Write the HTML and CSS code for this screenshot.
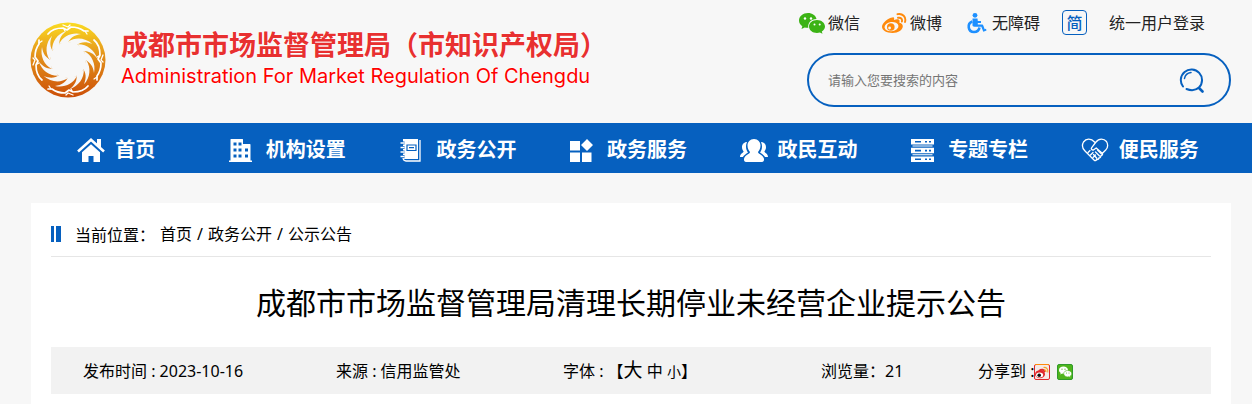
FILE: index.html
```
<!DOCTYPE html>
<html lang="zh-CN">
<head>
  <meta charset="UTF-8">
  <meta name="viewport" content="width=device-width, initial-scale=1.0">
  <title>成都市市场监督管理局清理长期停业未经营企业提示公告</title>
  <link rel="stylesheet" href="styles.css">
</head>
<body>

  <header class="header">
    <a class="logo" href="#">
      <svg class="logo-mark" viewBox="0 0 76 76" aria-hidden="true">
        <defs>
          <linearGradient id="gold" x1="0" y1="0" x2="0" y2="1">
            <stop offset="0" stop-color="#fbdc22"/>
            <stop offset="0.45" stop-color="#e3901a"/>
            <stop offset="1" stop-color="#cc4f08"/>
          </linearGradient>
          <path id="ray" d="M29 22 C33 14 42 10 51 12 C44 13 40 16 38 21 Z"/>
          <g id="bird" fill="none" stroke="#fff" stroke-linecap="round" stroke-linejoin="round">
            <path stroke-width="1.700" d="M18 12 C22 7 27 6 33 6 L37 8 L41 5 C46 5 50 6 54 9 L58 9"/>
            <path stroke-width="1.300" d="M33 3 L38 5 L40 3 M55 9 L57 12 M34 7 L35 9"/>
          </g>
        </defs>
        <circle cx="38" cy="38" r="37.500" fill="url(#gold)"/>
        <circle cx="38" cy="38" r="18" fill="#f7f7f7"/>
        <g fill="#f7f7f7">
          <use href="#ray"/>
          <use href="#ray" transform="rotate(30 38 38)"/>
          <use href="#ray" transform="rotate(60 38 38)"/>
          <use href="#ray" transform="rotate(90 38 38)"/>
          <use href="#ray" transform="rotate(120 38 38)"/>
          <use href="#ray" transform="rotate(150 38 38)"/>
          <use href="#ray" transform="rotate(180 38 38)"/>
          <use href="#ray" transform="rotate(210 38 38)"/>
          <use href="#ray" transform="rotate(240 38 38)"/>
          <use href="#ray" transform="rotate(270 38 38)"/>
          <use href="#ray" transform="rotate(300 38 38)"/>
          <use href="#ray" transform="rotate(330 38 38)"/>
        </g>
        <use href="#bird"/>
        <use href="#bird" transform="rotate(90 38 38)"/>
        <use href="#bird" transform="rotate(180 38 38)"/>
        <use href="#bird" transform="rotate(270 38 38)"/>
      </svg>
      <span class="logo-text">
        <span class="logo-cn">成都市市场监督管理局（市知识产权局）</span>
        <span class="logo-en">Administration For Market Regulation Of Chengdu</span>
      </span>
    </a>

    <div class="tools">
      <div class="top-links">
        <a href="#">
          <svg class="top-icon" viewBox="0 0 26 22" aria-hidden="true">
            <path fill="#3cb315" d="M9 1C4 1 0 4.300 0 8.500c0 2.400 1.300 4.300 3.300 5.700L2.500 17l3.200-1.600c1.200.3 2.200.5 3.600.4C8.500 11 12 7 17.500 7 16.800 3.500 13.200 1 9 1z"/>
            <path fill="#3cb315" d="M18 8c-4.500 0-8 2.900-8 6.500S13.500 21 18 21c1 0 2-.2 2.900-.5l2.600 1.300-.7-2.300c1.900-1.300 3.200-3 3.200-5C26 10.900 22.400 8 18 8z"/>
            <g fill="#fff"><circle cx="6" cy="6.500" r="1.200"/><circle cx="12" cy="6.500" r="1.200"/><circle cx="15.500" cy="12.500" r="1"/><circle cx="20.700" cy="12.500" r="1"/></g>
          </svg>
          微信
        </a>
        <a href="#">
          <svg class="top-icon" viewBox="0 0 25 22" aria-hidden="true">
            <path fill="#ff8a0c" d="M10.500 5.500C12 5 12.500 6 12 8c3-1.200 5.500-1 5.600 1 0 1-.6 1.500 0 1.800 2 .6 3.200 1.700 3.200 3.500 0 3.500-4.500 6.700-10.300 6.700C4.500 21 0 18.500 0 14.800 0 11 6.500 5.800 10.500 5.500z"/>
            <ellipse cx="9.500" cy="14.600" rx="7" ry="4.600" fill="#f7f7f7" transform="rotate(-7 9.500 14.600)"/>
            <circle cx="8.800" cy="15" r="3.800" fill="#ff8a0c"/>
            <circle cx="7.600" cy="16" r="1.400" fill="#f7f7f7"/>
            <path d="M15.500 2.200c5-1.200 9 2.800 7.500 7.800M16 5.800c2.800-.6 4.600 1.200 3.900 3.800" fill="none" stroke="#ff8a0c" stroke-width="1.900" stroke-linecap="round"/>
          </svg>
          微博
        </a>
        <a href="#">
          <svg class="top-icon" viewBox="0 0 25 22" aria-hidden="true">
            <circle cx="11" cy="3.300" r="2.400" fill="#1e90ff"/>
            <path fill="#1e90ff" d="M8.500 6.500h5l.3 2.500H17v2h-3.200v1.500h4c1 0 1.300.4 1.600 1.200l1.300 3.500 1.300-.4.5 1.700-3.200 1.200-2-5H10.500C9 14.700 8.500 14 8.500 13z"/>
            <path d="M8.300 9.500c-5.500 2-4.500 10.500 1.700 10.500 3 0 5-1.800 5.500-4.500" fill="none" stroke="#1e90ff" stroke-width="2.600"/>
          </svg>
          无障碍
        </a>
        <button class="lang-btn" type="button">简</button>
        <a href="#">统一用户登录</a>
      </div>

      <form class="search">
        <input type="text" placeholder="请输入您要搜索的内容" aria-label="搜索">
        <button type="submit" aria-label="搜索">
          <svg viewBox="0 0 26 26" aria-hidden="true">
            <g fill="none" stroke="#0660bf" stroke-linecap="round">
              <path stroke-width="2" d="M4 19.500A10.600 10.600 0 1 1 20 20.500Q15 25 7.500 22"/>
              <path stroke-width="1.500" d="M5.500 11.500C6 8.500 8.500 6 12 5.500"/>
              <path stroke-width="2.600" d="M20 21l3.500 3.500"/>
            </g>
          </svg>
        </button>
      </form>
    </div>
  </header>

  <nav class="nav">
    <a href="#">
      <svg viewBox="0 0 28 24" aria-hidden="true">
        <path d="M1 13.500L14 1.800l13 11.700" fill="none" stroke="#fff" stroke-width="2.600"/>
        <path fill="#fff" d="M20 1h4v9l-4-3.500zM14 6.200l9 8V24h-6.500v-6h-5v6H5v-9.800z"/>
      </svg>
      首页
    </a>
    <a href="#">
      <svg viewBox="0 0 28 24" aria-hidden="true">
        <path fill="#fff" fill-rule="evenodd" d="M2.500 22.500V1.500Q2.500 1 3 1H14.500Q15 1 15 1.500V6H22Q22.500 6 22.500 7V22.500H24V24H1V22.500zM5.500 4.500v3h3v-3zM10.500 4.500v3h3v-3zM5.500 10.500v3h3v-3zM10.500 10.500v3h3v-3zM17 10.500v3h3v-3zM5.500 16.500v3h3v-3zM10.500 16.500v3h3v-3zM17 16.500v3h3v-3z"/>
      </svg>
      机构设置
    </a>
    <a href="#">
      <svg viewBox="0 0 28 24" aria-hidden="true">
        <path fill="#fff" d="M5 1h15v20H7q-2 0-2-2z"/>
        <path d="M5 20q.5 3 3 3h14V2" fill="none" stroke="#fff" stroke-width="1.300"/>
        <path d="M2.500 5h4M2.500 9.500h4M2.500 14h4M2.500 18.500h4" stroke="#0660bf" stroke-width="3"/>
        <path d="M2.500 5h4M2.500 9.500h4M2.500 14h4M2.500 18.500h4" stroke="#fff" stroke-width="1.500"/>
        <path d="M9 7h9v5.500H9zM11 9.700h5" fill="none" stroke="#0660bf" stroke-width="1.200"/>
      </svg>
      政务公开
    </a>
    <a href="#">
      <svg viewBox="0 0 28 24" aria-hidden="true">
        <path fill="#fff" d="M1 3h10v9.500H1zM1 14.500h10V24H1zM13 14.500h9.500V24H13zM18 1l6 6-6 6-6-6z"/>
      </svg>
      政务服务
    </a>
    <a href="#">
      <svg viewBox="0 0 28 24" aria-hidden="true">
        <path fill="#fff" d="M14 1c4 0 6.500 3 6.500 6.500 0 3-1.200 5-2.500 6.500 0 2 5.500 3 6 7 .2 1.800-.5 3-2 3H6c-1.500 0-2.200-1.200-2-3 .5-4 6-5 6-7-1.300-1.500-2.500-3.500-2.500-6.500C7.500 4 10 1 14 1z"/>
        <path fill="#fff" d="M7 4C4 4 2 6.500 2 9c0 2 .7 3.300 1.600 4.500C3.300 15 0 15.500 0 19h3c.7-1.800 3-3 5-4.500C6 11.500 5.200 8 7 4zM21 4c3 0 5 2.500 5 5 0 2-.7 3.300-1.600 4.500.3 1.500 3.600 2 3.600 5.500h-3c-.7-1.800-3-3-5-4.500 2-3 2.800-6.500 1-10.500z"/>
      </svg>
      政民互动
    </a>
    <a href="#">
      <svg viewBox="0 0 28 24" aria-hidden="true">
        <path fill="#fff" d="M1 1h23v5.500H1zM1 9.800h23v5.500H1zM1 18.500h23V24H1zM2.500 7.500h20v1h-20zM2.500 16.300h20v1h-20z"/>
        <path stroke="#0660bf" stroke-width="1.600" d="M5 3.800h6M15 3.800h2M19 3.800h2M5 12.600h6M15 12.600h2M19 12.600h2M5 21.300h6M15 21.300h2M19 21.300h2"/>
      </svg>
      专题专栏
    </a>
    <a href="#">
      <svg viewBox="0 0 28 24" aria-hidden="true">
        <g fill="none" stroke="#fff" stroke-width="1.300" stroke-linecap="round" stroke-linejoin="round">
          <path d="M13.500 4C10 0 5 .5 2.500 4c-2 3.500-1 6.500 1.500 9l9 9c1 1 2 1 2.500-.5 1.500.5 2.500-.5 2.200-1.500 1.500 0 2.300-1 2-2.200 1.500 0 2.300-1.300 1.500-2.500l-6-5.300-2.500 1.800c-1.500.7-3-.8-2-2.200L15 4c3-4 8-3.500 10.500-.5 2 3.500 1.500 6-.8 8.500l-3.500 3.500"/>
          <path d="M7 14.500l2-2M9.500 17l2.500-2.500M12 19.500l2.500-2.500M14.500 14l4 4M12.500 16.500l3.500 4M16.500 12l4 4"/>
        </g>
      </svg>
      便民服务
    </a>
  </nav>

  <main class="article">
    <div class="crumbs">
      <span>当前位置<span class="colon">：</span></span> <a href="#">首页</a> / <a href="#">政务公开</a> / <a href="#">公示公告</a>
    </div>
    <h1>成都市市场监督管理局清理长期停业未经营企业提示公告</h1>
    <div class="meta">
      <span>发布时间 : 2023-10-16</span>
      <span>来源 : 信用监管处</span>
      <span class="font-size">字体 : 【<button class="big" type="button">大</button> <button type="button">中</button> <button class="small" type="button">小</button>】</span>
      <span>浏览量<span class="colon">：</span>21</span>
      <span class="share">分享到 :
        <a href="#" aria-label="分享到微博">
          <svg viewBox="0 0 16 16" aria-hidden="true">
            <rect x="0.500" y="0.500" width="15" height="15" rx="1.500" fill="#f5e9e6" stroke="#e0282c"/>
            <path d="M1 .5h14" stroke="#ff8a0c"/>
            <ellipse cx="6" cy="10.200" rx="5" ry="4" fill="#e0282c"/>
            <path d="M5 7q4-3 6 1" stroke="#e0282c" stroke-width="2" fill="none"/>
            <ellipse cx="5.600" cy="11" rx="3.600" ry="2.500" fill="#fff"/>
            <circle cx="5.200" cy="11.300" r="1.800" fill="#111"/>
            <path d="M9.500 3.500c3-.5 5 2 4.200 5M10 5.800c1.500 0 2.200 1 1.900 2.200" fill="none" stroke="#f5a32a" stroke-width="1.200"/>
          </svg>
        </a>
        <a href="#" aria-label="分享到微信">
          <svg viewBox="0 0 16 16" aria-hidden="true">
            <rect x="0.500" y="0.500" width="15" height="15" rx="1.500" fill="#4fb51c" stroke="#2f9a2b"/>
            <path fill="#fff" d="M6.500 2.500C3.800 2.500 2 4 2 6c0 1.300.6 2.200 1.700 2.900L3.300 10.500l1.900-1c.5.200 1 .2 1.500.2 4 0 4.500-2 4.300-3.700C10.800 4 9 2.500 6.500 2.500z"/>
            <path fill="#fff" stroke="#4fb51c" stroke-width="0.600" d="M10.700 6.500c-2.300 0-4 1.400-4 3.200s1.700 3.200 4 3.200l1.200-.2 1.500.9-.3-1.400c1-.6 1.600-1.500 1.600-2.500 0-1.800-1.700-3.200-4-3.200z"/>
            <g fill="#4fb51c"><circle cx="5" cy="5.200" r=".6"/><circle cx="8" cy="5.200" r=".6"/><circle cx="9.500" cy="9" r=".5"/><circle cx="12" cy="9" r=".5"/></g>
          </svg>
        </a>
      </span>
    </div>
  </main>

</body>
</html>
```

FILE: styles.css
```
*, *::before { box-sizing: border-box; margin: 0; padding: 0; }
body { font-family: "Noto Sans", "Noto Sans CJK SC", sans-serif; font-size: 16px; line-height: 24px; background: #f7f7f7; color: #000; }
a { color: inherit; text-decoration: none; }
button, input { font: inherit; color: inherit; border: none; background: none; }
button { cursor: pointer; }
svg { display: block; flex: none; }

.header { display: flex; justify-content: space-between; align-items: flex-start; padding: 10px 21px 16px 30px; }

.logo { display: flex; gap: 15px; padding-top: 12px; }
.logo-mark { width: 76px; height: 76px; }
.logo-text { display: flex; flex-direction: column; padding-top: 6px; white-space: nowrap; text-shadow: 0 0 2px #fff, 0 0 2px #fff; }
.logo-cn { font-family: "Noto Sans CJK SC", sans-serif; font-size: 27px; line-height: 32px; font-weight: bold; color: #e83030; }
.logo-en { font-family: Inter, sans-serif; font-size: 20px; line-height: 32px; color: #f00; }

.tools { width: 432px; }
.top-links { display: flex; align-items: center; gap: 22px; height: 25px; color: #222; white-space: nowrap; }
.top-links a { display: flex; align-items: center; gap: 3px; }
.top-icon { height: 22px; }
.lang-btn { width: 25px; height: 25px; border: 1px solid #0660bf; border-radius: 4px; color: #0660bf; line-height: 22px; font-weight: 500; }

.search { display: flex; align-items: center; height: 54px; margin: 18px 0 0 8px; padding: 0 24px 0 19px; border: 2px solid #0660bf; border-radius: 27px; }
.search input { flex: 1; min-width: 0; font-size: 13px; outline: none; }
.search input::placeholder { color: #757575; }
.search svg { width: 26px; height: 26px; }

.nav { display: grid; grid-template-columns: repeat(7, 1fr); height: 50px; padding: 0 27px 0 31px; background: #0660bf; }
.nav a { display: flex; align-items: center; justify-content: center; gap: 10px; padding-top: 3px; color: #fff; font-size: 20px; font-weight: bold; white-space: nowrap; }
.nav svg { width: 28px; height: 24px; }

.article { margin: 30px 21px 0 31px; padding: 0 20px 10px; background: #fff; }
.crumbs { display: flex; align-items: center; gap: 5px; height: 54px; padding-top: 9px; border-bottom: 1px solid #e6e6e6; }
.crumbs::before { content: ""; width: 10px; height: 16px; margin-right: 9px; border: solid #0660bf; border-width: 0 5px 0 3px; }
.colon { font-family: "Noto Sans CJK TC", sans-serif; }
.article h1 { padding: 22px 0 20px; font-size: 30px; line-height: 48px; font-weight: normal; text-align: center; }

.meta { display: grid; grid-template-columns: 253fr 227fr 258fr 157fr 233fr; align-items: center; height: 47px; padding-left: 32px; background: #f2f2f2; white-space: nowrap; }
.font-size .big { font-size: 19px; }
.font-size .small { font-size: 14px; }
.share { display: flex; align-items: center; }
.share a { margin-right: 7px; padding-top: 3px; }
.share svg { width: 16px; height: 16px; }
```
